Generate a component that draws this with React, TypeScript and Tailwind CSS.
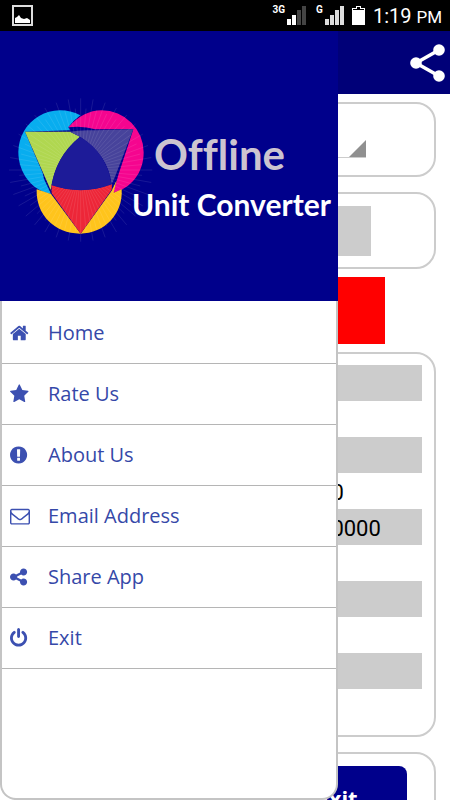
const menuItems = [
  {
    label: "Home",
    viewBox: "64 0 1792 1792",
    path: "M1472 992v480q0 26-19 45t-45 19h-384v-384h-256v384h-384q-26 0-45-19t-19-45v-480q0-1 .5-3t.5-3l575-474 575 474q1 2 1 6zm223-69l-62 74q-8 9-21 11h-3q-13 0-21-7l-692-577-692 577q-12 8-24 7-13-2-21-11l-62-74q-8-10-7-23.5t11-21.5l719-599q32-26 76-26t76 26l244 204v-195q0-14 9-23t23-9h192q14 0 23 9t9 23v408l219 182q10 8 11 21.5t-7 23.5z",
  },
  {
    label: "Rate Us",
    viewBox: "64 0 1792 1792",
    path: "M1728 647q0 22-26 48l-363 354 86 500q1 7 1 20 0 21-10.5 35.5t-30.5 14.5q-19 0-40-12l-449-236-449 236q-22 12-40 12-21 0-31.5-14.5t-10.5-35.5q0-6 2-20l86-500-364-354q-25-27-25-48 0-37 56-46l502-73 225-455q19-41 49-41t49 41l225 455 502 73q56 9 56 46z",
  },
  {
    label: "About Us",
    viewBox: "128 0 1792 1792",
    path: "M896 128q209 0 385.5 103t279.5 279.5 103 385.5-103 385.5-279.5 279.5-385.5 103-385.5-103-279.5-279.5-103-385.5 103-385.5 279.5-279.5 385.5-103zm128 1247v-190q0-14-9-23.5t-22-9.5h-192q-13 0-23 10t-10 23v190q0 13 10 23t23 10h192q13 0 22-9.5t9-23.5zm-2-344l18-621q0-12-10-18-10-8-24-8h-220q-14 0-24 8-10 6-10 18l17 621q0 10 10 17.5t24 7.5h185q14 0 23.5-7.5t10.5-17.5z",
  },
  {
    label: "Email Address",
    viewBox: "0 0 1792 1792",
    path: "M1664 1504v-768q-32 36-69 66-268 206-426 338-51 43-83 67t-86.5 48.5-102.5 24.5h-2q-48 0-102.5-24.5t-86.5-48.5-83-67q-158-132-426-338-37-30-69-66v768q0 13 9.5 22.5t22.5 9.5h1472q13 0 22.5-9.5t9.5-22.5zm0-1051v-24.5l-.5-13-3-12.5-5.5-9-9-7.5-14-2.5h-1472q-13 0-22.5 9.5t-9.5 22.5q0 168 147 284 193 152 401 317 6 5 35 29.5t46 37.5 44.5 31.5 50.5 27.5 43 9h2q20 0 43-9t50.5-27.5 44.5-31.5 46-37.5 35-29.5q208-165 401-317 54-43 100.5-115.5t46.5-131.5zm128-37v1088q0 66-47 113t-113 47h-1472q-66 0-113-47t-47-113v-1088q0-66 47-113t113-47h1472q66 0 113 47t47 113z",
  },
  {
    label: "Share App",
    viewBox: "128 0 1792 1792",
    path: "M1344 1024q133 0 226.5 93.5t93.5 226.5-93.5 226.5-226.5 93.5-226.5-93.5-93.5-226.5q0-12 2-34l-360-180q-92 86-218 86-133 0-226.5-93.5t-93.5-226.5 93.5-226.5 226.5-93.5q126 0 218 86l360-180q-2-22-2-34 0-133 93.5-226.5t226.5-93.5 226.5 93.5 93.5 226.5-93.5 226.5-226.5 93.5q-126 0-218-86l-360 180q2 22 2 34t-2 34l360 180q92-86 218-86z",
  },
  {
    label: "Exit",
    viewBox: "128 0 1792 1792",
    path: "M1664 896q0 156-61 298t-164 245-245 164-298 61-298-61-245-164-164-245-61-298q0-182 80.5-343t226.5-270q43-32 95.5-25t83.5 50q32 42 24.5 94.5t-49.5 84.5q-98 74-151.5 181t-53.5 228q0 104 40.5 198.5t109.5 163.5 163.5 109.5 198.5 40.5 198.5-40.5 163.5-109.5 109.5-163.5 40.5-198.5q0-121-53.5-228t-151.5-181q-42-32-49.5-84.5t24.5-94.5q31-43 84-50t95 25q146 109 226.5 270t80.5 343zm-640-768v640q0 52-38 90t-90 38-90-38-38-90v-640q0-52 38-90t90-38 90 38 38 90z",
  },
];

const results = ["", "", "", "0", "0000", "", "", "", ""];

const rays = Array.from({ length: 72 }, (_, i) => {
  const angle = (i * Math.PI) / 36;
  const length = i % 2 ? 185 : 215;
  return {
    x: 242 + Math.cos(angle) * length,
    y: 225 + Math.sin(angle) * length,
  };
});

function Rays({ opacity }: { opacity: number }) {
  return (
    <g stroke="#ffffff" strokeWidth="3" opacity={opacity}>
      {rays.map((ray, i) => (
        <line key={i} x1="242" y1="225" x2={ray.x} y2={ray.y} />
      ))}
    </g>
  );
}

function Logo() {
  return (
    <svg viewBox="0 0 480 480" className="size-40 shrink-0" aria-hidden="true">
      <path
        fill="#08adef"
        d="M241 61A126 126 0 0 0 55 170C55 235 98 287 153 297L132 252L128 234L75 110L210 106L205 97Q218 78 241 61Z"
      />
      <path
        fill="#f5058f"
        d="M205 97Q250 46 305 46A126 126 0 0 1 431 172C431 235 392 281 340 293L355 240L400 103H285Q250 92 205 97Z"
      />
      <path
        fill="#ffc41c"
        d="M110 283L153 297L242 416L335 287L350 256L341 293L365 283C370 355 315 416 240 416C165 416 107 360 110 283Z"
      />
      <path fill="#b0d750" d="M75 110H210L240 125Q165 185 152 285Z" />
      <path fill="#47439b" d="M210 110Q240 104 285 106L400 103L345 245L335 268Q325 180 240 125Z" />
      <path fill="#ed2638" d="M154 270Q245 300 336 268L335 284L242 416L155 295Z" />
      <Rays opacity={0.09} />
      <path fill="#1d1b98" d="M240 125Q322 175 334 268Q245 302 155 270Q168 185 240 125Z" />
    </svg>
  );
}

function StatusBar() {
  return (
    <div className="flex h-[31px] shrink-0 items-center justify-between bg-black pr-2 pl-3 font-[Roboto,sans-serif] text-white">
      <svg viewBox="0 0 21 21" className="size-[21px]" aria-hidden="true">
        <rect x="1" y="1" width="19" height="19" fill="none" stroke="#ddd" strokeWidth="2" />
        <path fill="#fff" d="M3 18V13L5 12L7 10L9 13L12 14L15 13L18 15V18Z" />
      </svg>
      <div className="flex items-center">
        <span className="mr-0.5 self-start text-[10px] leading-4 font-bold">3G</span>
        <svg viewBox="0 0 19 19" className="mr-2.5 size-[19px]" aria-hidden="true">
          <path fill="#fff" d="M0 13h4v6H0zM5 9h4v10H5z" />
          <path fill="#444" d="M10 4h4v15h-4zM15 0h4v19h-4z" />
        </svg>
        <span className="mr-0.5 self-start text-[10px] leading-4 font-bold">G</span>
        <svg viewBox="0 0 19 19" className="mr-2 size-[19px]" aria-hidden="true">
          <path fill="#ddd" d="M0 13h4v6H0zM5 9h4v10H5zM10 4h4v15h-4zM15 0h4v19h-4z" />
        </svg>
        <svg viewBox="0 0 13 19" className="mr-2 h-[19px] w-[13px]" aria-hidden="true">
          <path fill="#fff" d="M4 0h5v2h4v17H0V2h4z" />
          <path fill="#000" d="M5 1h3v2h4v1H1V3h4z" />
        </svg>
        <span className="pt-0.5 text-xl leading-6">
          1:19 <span className="text-[17px]">PM</span>
        </span>
      </div>
    </div>
  );
}

function Drawer() {
  return (
    <aside className="absolute inset-y-0 left-0 flex w-3/4 flex-col">
      <div className="flex h-[270px] shrink-0 items-center bg-[#00008b] pt-[18px]">
        <Logo />
        <h1 className="z-10 -ml-7 flex flex-col pt-2 font-[Lato,sans-serif] font-bold whitespace-nowrap [font-variant-ligatures:none]">
          <span className="pl-[22px] text-[42px] leading-[50px] text-[#ccc4d0]">Offline</span>
          <span className="text-[30px] leading-[50px] text-white">Unit Converter</span>
        </h1>
      </div>
      <nav className="grow rounded-b-2xl border-x-2 border-b-2 border-[#c4c4c4] bg-white pt-0.5 font-['Open_Sans',sans-serif]">
        {menuItems.map((item) => (
          <a
            key={item.label}
            href="#"
            className="flex h-[61px] items-center gap-[18px] border-b border-[#b5b5b5] pl-2 text-xl font-medium text-[#3548a8]"
          >
            <svg viewBox={item.viewBox} className="size-5 fill-[#3c50b1]" aria-hidden="true">
              <path d={item.path} />
            </svg>
            {item.label}
          </a>
        ))}
      </nav>
    </aside>
  );
}

export default function App() {
  return (
    <div className="flex h-screen flex-col overflow-hidden bg-white">
      <StatusBar />
      <div className="relative min-h-0 grow overflow-hidden">
        <header className="flex h-[63px] items-center justify-end bg-[#000078] pr-1">
          <button type="button" aria-label="Share">
            <svg viewBox="0 0 36 40" className="h-10 w-9" aria-hidden="true">
              <path d="M29 7L6 20L29 33" fill="none" stroke="#fff" strokeWidth="3.5" />
              <g fill="#fff">
                <circle cx="29" cy="7" r="5.8" />
                <circle cx="6" cy="20" r="5.8" />
                <circle cx="29" cy="33" r="5.8" />
              </g>
            </svg>
          </button>
        </header>

        <main className="flex flex-col px-3.5 pt-2 font-[Roboto,sans-serif] text-[22px] text-black">
          <section className="mb-[15px] h-[75px] rounded-[20px] border-2 border-[#ccc] pt-3 pr-[68px] pl-16">
            <div className="flex h-[42px] items-end border-b border-[#ccc]">
              <select aria-label="Unit" className="h-full grow appearance-none" />
              <svg viewBox="0 0 17 17" className="size-[17px]" aria-hidden="true">
                <path fill="#909090" d="M17 0V17H0Z" />
              </svg>
            </div>
          </section>

          <section className="mb-2 h-[77px] rounded-[20px] border-2 border-[#ccc] px-[63px] pt-3">
            <input aria-label="Value" className="h-[50px] w-full bg-[#ccc]" />
          </section>

          <button type="button" aria-label="Convert" className="mx-[51px] mb-2 h-[67px] bg-[#ff0000]" />

          <section className="mb-[15px] h-[385px] rounded-[20px] border-2 border-[#ccc] px-3 pt-[11px]">
            <table className="w-full table-fixed">
              <tbody>
                {results.map((value, i) => (
                  <tr key={i} className="h-9 odd:bg-[#ccc]">
                    <th className="w-[77%]" />
                    <td className="pt-1 leading-8">{value}</td>
                  </tr>
                ))}
              </tbody>
            </table>
          </section>

          <section className="flex h-24 justify-end rounded-[20px] border-2 border-[#ccc] pt-3 pr-[27px]">
            <button
              type="button"
              className="h-16 w-[140px] rounded-lg bg-[#00008b] font-['Open_Sans',sans-serif] text-[22px] font-bold text-white"
            >
              Exit
            </button>
          </section>
        </main>

        <Drawer />
      </div>
    </div>
  );
}
